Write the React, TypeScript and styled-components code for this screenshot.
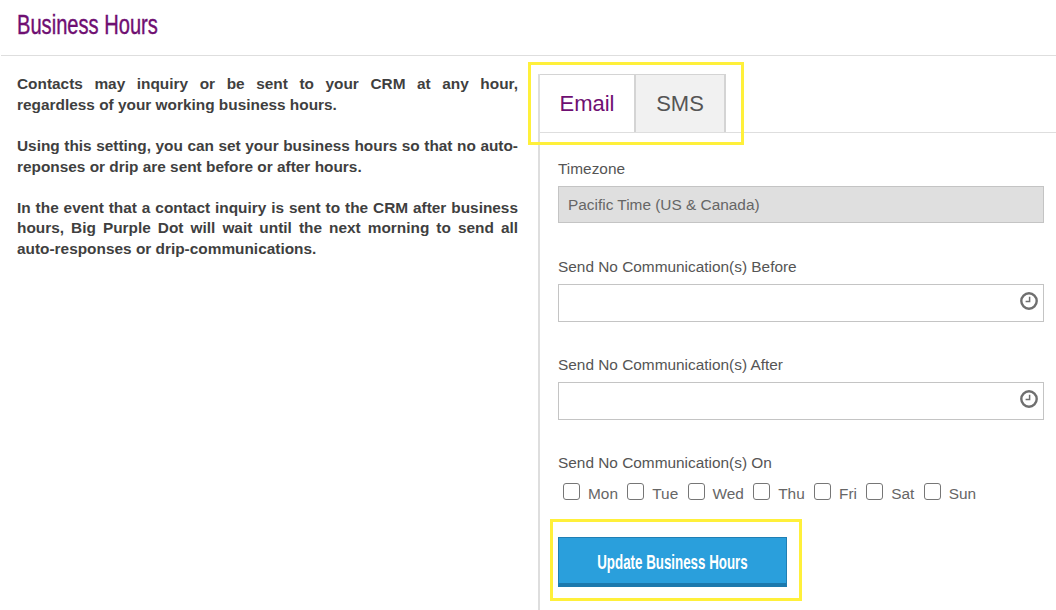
import React from "react";
import styled, { createGlobalStyle } from "styled-components";

const Global = createGlobalStyle`
  html, body { margin: 0; padding: 0; background: #fff; overflow: hidden; }
  body { font-family: "Liberation Sans", Arial, sans-serif; color: #4a4a4a; }
  * { box-sizing: border-box; }
`;

const Page = styled.div`
  position: relative;
  width: 1056px;
  height: 610px;
  overflow: hidden;
`;

const Header = styled.header`
  height: 56px;
  margin-left: 1px;
  padding: 9px 0 0 16px;
  border-bottom: 1px solid #dedede;
`;

const Title = styled.h1`
  margin: 0;
  display: inline-block;
  font-family: "Liberation Sans", sans-serif;
  font-weight: 400;
  font-size: 27px;
  line-height: 32px;
  color: #6f0f72;
  -webkit-text-stroke: 0.4px #6f0f72;
  transform: scaleX(0.745);
  transform-origin: left center;
`;

const Columns = styled.div`
  display: grid;
  grid-template-columns: 538px 518px;
  height: 554px;
`;

const Intro = styled.div`
  padding: 18px 20px 0 17px;
`;

const Para = styled.p`
  margin: 0 0 20.4px;
  font-size: 15.4px;
  font-weight: 700;
  line-height: 20.7px;
  color: #3f3f3f;
  text-align: justify;
`;

const Panel = styled.section`
  margin-top: 18px;
  border-left: 2px solid #dedede;
`;

const Tabs = styled.div`
  display: flex;
  height: 59px;
  border-bottom: 1px solid #dedede;
`;

const Tab = styled.div<{ $active?: boolean }>`
  height: 58px;
  padding-top: 15px;
  font-size: 22px;
  line-height: 28px;
  text-align: center;
  border-top: 1px solid #d4d4d4;
  border-right: 2px solid #d4d4d4;
  width: ${(p) => (p.$active ? "96px" : "90px")};
  color: ${(p) => (p.$active ? "#6f0f72" : "#555")};
  background: ${(p) => (p.$active ? "#fff" : "#f1f1f1")};
`;

const Form = styled.form`
  padding: 26px 12px 0 18px;
`;

const Label = styled.div`
  font-size: 15.4px;
  line-height: 20px;
  color: #555;
`;

const Field = styled.div<{ $disabled?: boolean }>`
  display: flex;
  align-items: center;
  justify-content: space-between;
  height: ${(p) => (p.$disabled ? "37px" : "38px")};
  margin: 7px 0 ${(p) => (p.$disabled ? "34px" : "33px")};
  padding: 0 5px 0 9px;
  font-size: 15.4px;
  color: #666;
  border: 1px solid #c4c4c4;
  background: ${(p) => (p.$disabled ? "#dfdfdf" : "#fff")};
`;

const Days = styled.div`
  display: flex;
  align-items: center;
  margin: 9px 0 0 5px;
  height: 24px;
`;

const Day = styled.label`
  display: flex;
  align-items: center;
  margin-right: 9.3px;
  font-size: 15.4px;
  color: #666;
`;

const Box = styled.span`
  display: block;
  width: 17px;
  height: 17px;
  margin-right: 8px;
  margin-top: -5px;
  border: 1.5px solid #767676;
  border-radius: 3px;
  background: #fff;
`;

const Submit = styled.button`
  display: flex;
  align-items: center;
  justify-content: center;
  width: 229px;
  height: 50px;
  margin-top: 31px;
  padding: 2px 0 0;
  border: 1px solid #1f7fb4;
  border-bottom: 4px solid #1c79ad;
  border-radius: 0;
  background: #2a9fdc;
  color: #fff;
  font-family: "Liberation Sans", sans-serif;
  font-size: 21px;
  font-weight: 700;
`;

const SubmitLabel = styled.span`
  flex: none;
  white-space: nowrap;
  transform: scaleX(0.635);
`;

const Highlight = styled.div<{ $x: number; $y: number; $w: number; $h: number }>`
  position: absolute;
  left: ${(p) => p.$x}px;
  top: ${(p) => p.$y}px;
  width: ${(p) => p.$w}px;
  height: ${(p) => p.$h}px;
  border: 3px solid #fff03a;
  pointer-events: none;
`;

const ClockIcon = styled.svg`
  display: block;
  margin-bottom: 4px;
`;

const Clock = () => (
  <ClockIcon width="18" height="18" viewBox="0 0 18 18" fill="none" stroke="#6f6f6f">
    <circle cx="9" cy="9" r="7.7" strokeWidth="2.4" />
    <path d="M9.6 4.8v4.8H5.6" strokeWidth="1.5" />
  </ClockIcon>
);

const days = ["Mon", "Tue", "Wed", "Thu", "Fri", "Sat", "Sun"];

export default function App() {
  return (
    <Page>
      <Global />
      <Header>
        <Title>Business Hours</Title>
      </Header>
      <Columns>
        <Intro>
          <Para>
            Contacts may inquiry or be sent to your CRM at any hour, regardless of your working business hours.
          </Para>
          <Para>
            Using this setting, you can set your business hours so that no auto-reponses or drip are sent before or
            after hours.
          </Para>
          <Para>
            In the event that a contact inquiry is sent to the CRM after business hours, Big Purple Dot will wait until
            the next morning to send all auto-responses or drip-communications.
          </Para>
        </Intro>
        <Panel>
          <Tabs>
            <Tab $active>Email</Tab>
            <Tab>SMS</Tab>
          </Tabs>
          <Form>
            <Label>Timezone</Label>
            <Field $disabled>Pacific Time (US &amp; Canada)</Field>
            <Label>Send No Communication(s) Before</Label>
            <Field>
              <span />
              <Clock />
            </Field>
            <Label>Send No Communication(s) After</Label>
            <Field>
              <span />
              <Clock />
            </Field>
            <Label>Send No Communication(s) On</Label>
            <Days>
              {days.map((d) => (
                <Day key={d}>
                  <Box />
                  {d}
                </Day>
              ))}
            </Days>
            <Submit type="button">
              <SubmitLabel>Update Business Hours</SubmitLabel>
            </Submit>
          </Form>
        </Panel>
      </Columns>
      <Highlight $x={528} $y={62} $w={216} $h={83} />
      <Highlight $x={550} $y={519} $w={252} $h={82} />
    </Page>
  );
}
